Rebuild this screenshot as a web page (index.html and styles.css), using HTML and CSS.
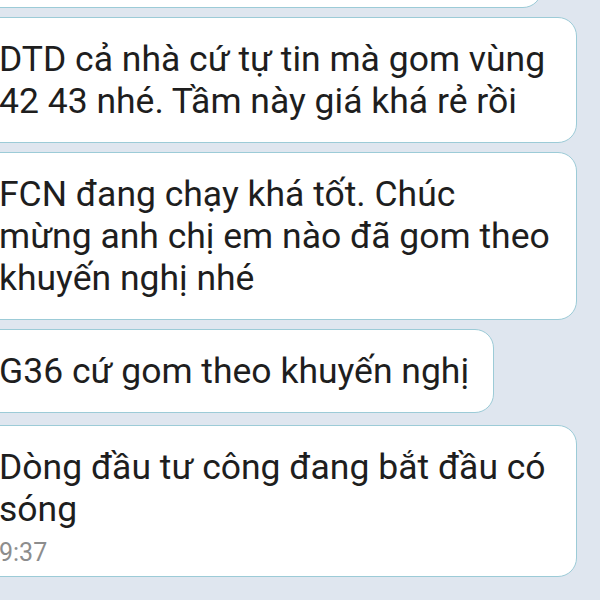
FILE: index.html
```html
<!DOCTYPE html>
<html lang="vi">
<head>
  <meta charset="UTF-8">
  <title>Tin nhắn</title>
  <link rel="stylesheet" href="styles.css">
</head>
<body>
  <div class="chat">
    <div class="bubble prev"></div>
    <div class="bubble wide">DTD cả nhà cứ tự tin mà gom vùng<br>42 43 nhé. Tầm này giá khá rẻ rồi</div>
    <div class="bubble wide">FCN đang chạy khá tốt. Chúc<br>mừng anh chị em nào đã gom theo<br>khuyến nghị nhé</div>
    <div class="bubble">G36 cứ gom theo khuyến nghị</div>
    <div class="bubble wide last">
      Dòng đầu tư công đang bắt đầu có<br>sóng
      <div class="time">9:37</div>
    </div>
  </div>
</body>
</html>
```

FILE: styles.css
```css
body { margin: 0; background: #dfe6ef; font-family: Roboto, "Noto Sans", Arial, sans-serif; color: #1e1e1e; overflow: hidden; }
.chat { display: flex; flex-direction: column; align-items: flex-start; gap: 9px; margin-left: -30px; }
.bubble { box-sizing: border-box; background: #fff; border: 1.5px solid #9ccbd7; border-radius: 19px; padding: 20px 24px 20px 28px; font-size: 35.5px; line-height: 42px; white-space: nowrap; }
.bubble.wide { width: 607px; }
.bubble.prev { width: 572px; height: 48px; margin-top: -40px; padding: 0; }
.bubble.last { margin-top: 3px; padding-bottom: 9px; }
.time { font-size: 25px; line-height: 28px; color: #8d8d8d; margin-top: 9px; }
```
